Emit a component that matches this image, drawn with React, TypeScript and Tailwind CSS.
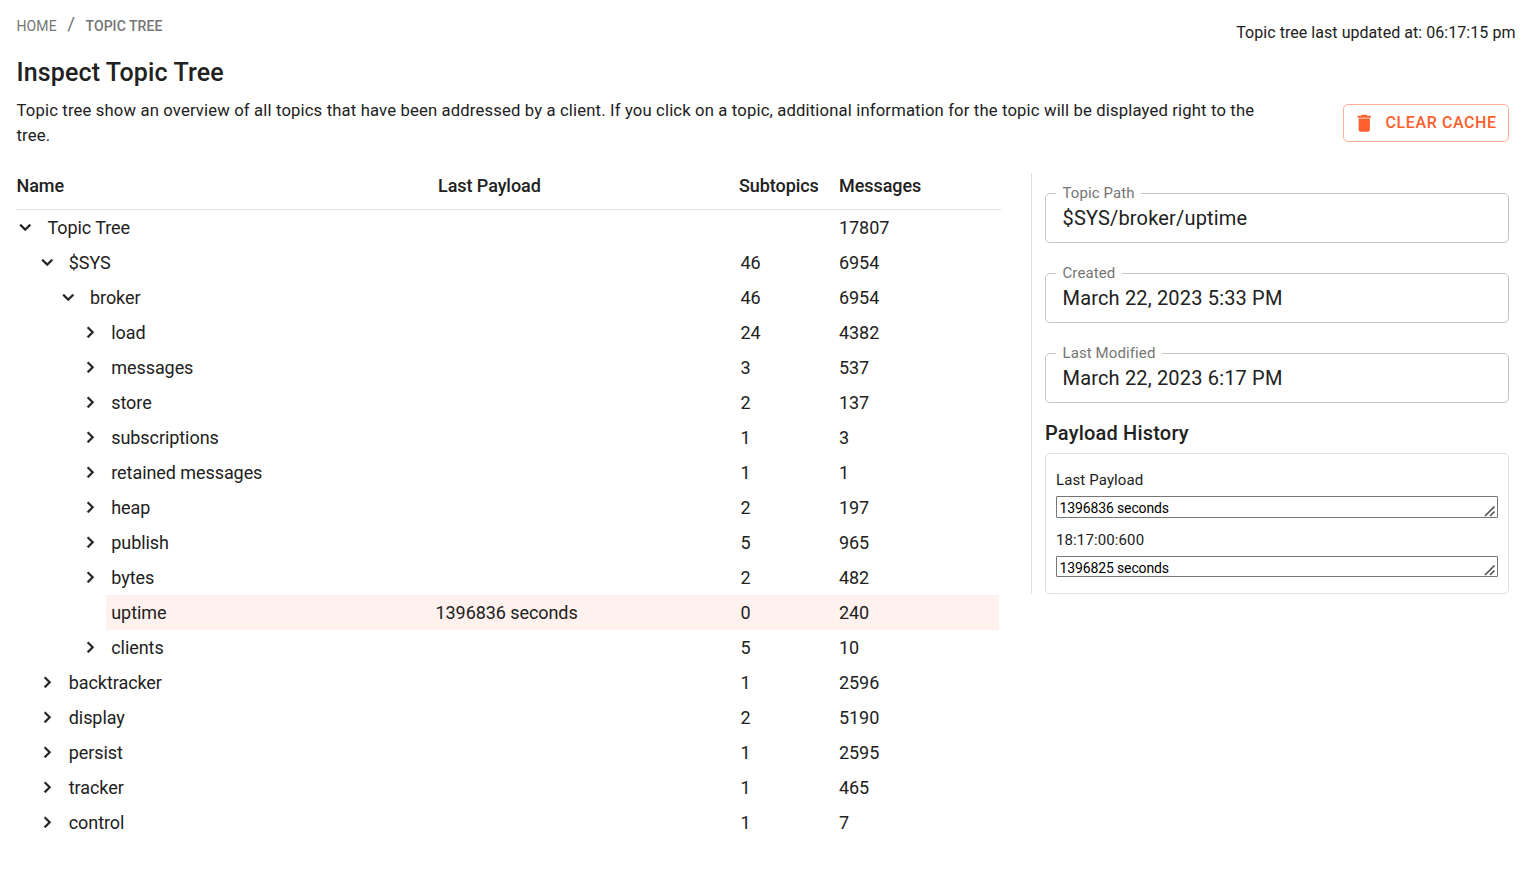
type Node = {
  name: string;
  level: number;
  state: "open" | "closed" | "leaf";
  payload?: string;
  subtopics?: number;
  messages: number;
  selected?: boolean;
};

const nodes: Node[] = [
  { name: "Topic Tree", level: 0, state: "open", messages: 17807 },
  { name: "$SYS", level: 1, state: "open", subtopics: 46, messages: 6954 },
  { name: "broker", level: 2, state: "open", subtopics: 46, messages: 6954 },
  { name: "load", level: 3, state: "closed", subtopics: 24, messages: 4382 },
  { name: "messages", level: 3, state: "closed", subtopics: 3, messages: 537 },
  { name: "store", level: 3, state: "closed", subtopics: 2, messages: 137 },
  { name: "subscriptions", level: 3, state: "closed", subtopics: 1, messages: 3 },
  { name: "retained messages", level: 3, state: "closed", subtopics: 1, messages: 1 },
  { name: "heap", level: 3, state: "closed", subtopics: 2, messages: 197 },
  { name: "publish", level: 3, state: "closed", subtopics: 5, messages: 965 },
  { name: "bytes", level: 3, state: "closed", subtopics: 2, messages: 482 },
  { name: "uptime", level: 3, state: "leaf", payload: "1396836 seconds", subtopics: 0, messages: 240, selected: true },
  { name: "clients", level: 3, state: "closed", subtopics: 5, messages: 10 },
  { name: "backtracker", level: 1, state: "closed", subtopics: 1, messages: 2596 },
  { name: "display", level: 1, state: "closed", subtopics: 2, messages: 5190 },
  { name: "persist", level: 1, state: "closed", subtopics: 1, messages: 2595 },
  { name: "tracker", level: 1, state: "closed", subtopics: 1, messages: 465 },
  { name: "control", level: 1, state: "closed", subtopics: 1, messages: 7 },
];

const indents = ["pl-0", "pl-[21.25px]", "pl-[42.5px]", "pl-[63.75px]"];

function Chevron({ state }: { state: Node["state"] }) {
  return (
    <span className="flex w-[19px] shrink-0 justify-center">
      {state !== "leaf" && (
        <svg
          viewBox="0 0 24 24"
          fill="currentColor"
          stroke="currentColor"
          strokeWidth="0.4"
          className={`size-[22.5px] shrink-0 ${state === "closed" ? "ml-[1px]" : ""}`}
        >
          {state === "open" ? (
            <path d="M16.59 8.59 12 13.17 7.41 8.59 6 10l6 6 6-6z" />
          ) : (
            <path d="M10 6 8.59 7.41 13.17 12l-4.58 4.59L10 18l6-6z" />
          )}
        </svg>
      )}
    </span>
  );
}

function TreeRow({ node }: { node: Node }) {
  return (
    <li className={`flex h-[35px] items-center ${indents[node.level]}`}>
      <Chevron state={node.state} />
      <div
        className={`ml-[6.75px] mr-[2px] flex h-full min-w-0 flex-1 items-center pl-[5.75px] ${
          node.selected ? "bg-[#fff2ee]" : ""
        }`}
      >
        <span className="flex-1">{node.name}</span>
        <span className="w-[305px]">{node.payload}</span>
        <span className="w-[98.5px]">{node.subtopics}</span>
        <span className="w-[160px]">{node.messages}</span>
      </div>
    </li>
  );
}

function Field({ label, value }: { label: string; value: string }) {
  return (
    <fieldset className="h-[57px] rounded-[5px] border border-[#c4c4c4] pl-[10px]">
      <legend className="h-[15px] pl-[6.5px] pr-[6.5px] text-[15px] leading-[15px] tracking-[0.1px] text-[#757575]">
        {label}
      </legend>
      <div className="pl-[6.5px] text-[20px] leading-[34px] tracking-[0.17px]">{value}</div>
    </fieldset>
  );
}

function Payload({ label, value, box }: { label: string; value: string; box: string }) {
  return (
    <div className="h-[60px]">
      <div className="h-[32px] text-[15px] leading-[32px] tracking-[0.12px]">{label}</div>
      <div className={`relative ${box}`}>
        <textarea
          readOnly
          rows={1}
          defaultValue={value}
          aria-label={label}
          className="block h-full w-full resize-none overflow-hidden rounded-[1px] border border-[#767676] px-[2.5px] pt-[1px] text-[14px] leading-[20px] tracking-[-0.13px] text-black"
        />
        <svg
          viewBox="0 0 12 12"
          className="absolute bottom-px right-[2px] size-3"
          fill="none"
          stroke="#555"
          strokeWidth="1.7"
        >
          <path d="M1 11 10.5 1.5M6 11l4.5-4.5" />
        </svg>
      </div>
    </div>
  );
}

export default function App() {
  return (
    <div className="h-[870px] overflow-hidden bg-white font-[Roboto,sans-serif] text-[#212121]">
      <header className="h-[160px] pl-[16.5px]">
        <div className="flex h-[98px] justify-between">
          <div>
            <nav className="flex h-[53px] items-center text-[14px] text-[#757575]">
              <span className="tracking-[0.1px]">HOME</span>
              <span className="mx-[10.5px] -mt-1 text-[19px]">/</span>
              <span className="font-medium tracking-[0.05px]">TOPIC TREE</span>
            </nav>
            <h1 className="text-[25px] font-medium leading-[40px] tracking-[0.13px]">Inspect Topic Tree</h1>
          </div>
          <div className="mr-[8.5px] text-[16px] leading-[65px] tracking-[0.05px]">
            Topic tree last updated at: 06:17:15 pm
          </div>
        </div>
        <div className="flex items-start justify-between">
          <p className="w-[1260px] text-[16.67px] leading-[25px] tracking-[0.15px]">
            Topic tree show an overview of all topics that have been addressed by a client. If you click on a topic,
            additional information for the topic will be displayed right to the tree.
          </p>
          <button className="mr-[15px] mt-[6px] flex h-[38px] w-[166px] items-center whitespace-nowrap rounded-[5px] border border-[#ffae96] pl-[9px] text-[16px] font-medium tracking-[0.6px] text-[#ff5e2d]">
            <svg viewBox="0 0 24 24" fill="currentColor" className="mr-[10px] size-[22.5px]">
              <path d="M6 19c0 1.1.9 2 2 2h8c1.1 0 2-.9 2-2V7H6v12zM19 4h-3.500l-1-1h-5l-1 1H5v2h14V4z" />
            </svg>
            CLEAR CACHE
          </button>
        </div>
      </header>

      <main className="flex items-start pl-4 pr-[15px]">
        <section className="w-[985px] text-[18px] tracking-[-0.07px]">
          <div className="flex h-[50px] items-center border-b border-[#e0e0e0] pl-[0.5px] pt-[2px] font-medium">
            <span className="w-[421.5px]">Name</span>
            <span className="w-[301px]">Last Payload</span>
            <span className="w-[100px]">Subtopics</span>
            <span>Messages</span>
          </div>
          <ul>
            {nodes.map((n) => (
              <TreeRow key={n.name} node={n} />
            ))}
          </ul>
        </section>

        <aside className="ml-[30px] mt-[13px] h-[421px] flex-1 border-l border-[#e0e0e0] pl-[13px] pt-[13px]">
          <div className="flex flex-col gap-[23px]">
            <Field label="Topic Path" value="$SYS/broker/uptime" />
            <Field label="Created" value="March 22, 2023 5:33 PM" />
            <Field label="Last Modified" value="March 22, 2023 6:17 PM" />
          </div>
          <h2 className="mt-[14px] h-[36px] text-[20px] font-medium leading-[32px] tracking-[0.19px]">Payload History</h2>
          <div className="h-[141px] rounded-[5px] border border-[#e0e0e0] px-[10px] pt-[10px]">
            <Payload label="Last Payload" value="1396836 seconds" box="h-[22px]" />
            <Payload label="18:17:00:600" value="1396825 seconds" box="h-[21px]" />
          </div>
        </aside>
      </main>
    </div>
  );
}
